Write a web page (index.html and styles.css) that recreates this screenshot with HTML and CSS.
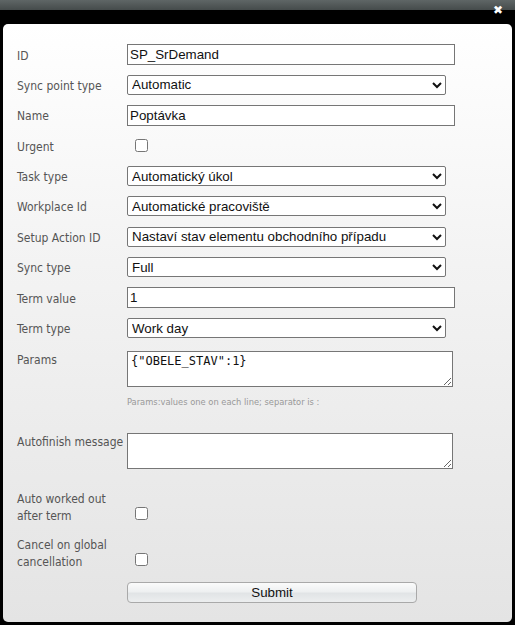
FILE: index.html
```html
<!DOCTYPE html>
<html>
<head>
<meta charset="utf-8">
<link rel="stylesheet" href="styles.css">
</head>
<body>
<div class="titlebar"></div>
<span class="close">✖</span>
<div class="dialog">
  <form class="form">
    <div class="row"><label class="lbl">ID</label><input class="txt" type="text" value="SP_SrDemand"></div>
    <div class="row"><label class="lbl">Sync point type</label><select class="sel"><option>Automatic</option></select></div>
    <div class="row"><label class="lbl">Name</label><input class="txt" type="text" value="Poptávka"></div>
    <div class="row"><label class="lbl">Urgent</label><input class="chk" type="checkbox"></div>
    <div class="row"><label class="lbl">Task type</label><select class="sel"><option>Automatický úkol</option></select></div>
    <div class="row"><label class="lbl">Workplace Id</label><select class="sel"><option>Automatické pracoviště</option></select></div>
    <div class="row"><label class="lbl">Setup Action ID</label><select class="sel"><option>Nastaví stav elementu obchodního případu</option></select></div>
    <div class="row"><label class="lbl">Sync type</label><select class="sel"><option>Full</option></select></div>
    <div class="row"><label class="lbl">Term value</label><input class="txt" type="text" value="1"></div>
    <div class="row"><label class="lbl">Term type</label><select class="sel"><option>Work day</option></select></div>
    <div class="row row-area params"><label class="lbl">Params</label><textarea class="area">{"OBELE_STAV":1}</textarea></div>
    <div class="hint">Params:values one on each line; separator is :</div>
    <div class="row row-area autofinish"><label class="lbl">Autofinish message</label><textarea class="area"></textarea></div>
    <div class="row row-multi"><label class="lbl">Auto worked out after term</label><input class="chk" type="checkbox"></div>
    <div class="row row-multi"><label class="lbl">Cancel on global cancellation</label><input class="chk" type="checkbox"></div>
    <div class="actions"><button class="submit" type="button">Submit</button></div>
  </form>
</div>
</body>
</html>
```
FILE: styles.css
```css
html, body {
  margin: 0;
  padding: 0;
  background: #000;
  height: 625px;
  overflow: hidden;
}
.titlebar {
  height: 10px;
  background: linear-gradient(#5f6666, #454b4b);
  margin-bottom: 14px;
}
.close {
  position: absolute;
  left: 493px;
  top: 3px;
  color: #fff;
  font: bold 12px "DejaVu Sans", sans-serif;
  line-height: 14px;
}
.dialog {
  margin: 0 3px;
  height: 598px;
  box-sizing: border-box;
  border-radius: 5px;
  background: linear-gradient(#ffffff 0%, #f3f3f3 40%, #e4e4e4 100%);
  padding: 20px 0 0 14px;
}
.form {
  display: flex;
  flex-direction: column;
}
.row {
  display: flex;
  align-items: center;
  height: 21px;
  margin-bottom: 9.4px;
}
.lbl {
  width: 110px;
  flex: none;
  font: 12px "DejaVu Sans Condensed", "DejaVu Sans", sans-serif;
  font-stretch: condensed;
  color: #555;
  line-height: 17px;
  padding-top: 3px;
}
.txt {
  box-sizing: border-box;
  width: 328px;
  height: 21px;
  margin: 0;
  border: 1px solid #767676;
  padding: 1px 2px;
  font: 13.33px "Liberation Sans", Arial, sans-serif;
  color: #111;
  background: #fff;
}
.sel {
  box-sizing: border-box;
  width: 319px;
  height: 20px;
  margin: 0;
  font: 13.33px "Liberation Sans", Arial, sans-serif;
  color: #111;
  background: #fff;
  border: 1px solid #767676;
  border-radius: 2px;
}
.chk {
  width: 13px;
  height: 13px;
  margin: 0 0 0 8px;
}
.row-area {
  height: auto;
  align-items: flex-start;
}
.row-area .lbl {
  padding-top: 1px;
}
.params {
  margin-top: 3px;
  margin-bottom: 0;
}
.area {
  box-sizing: border-box;
  width: 326px;
  height: 36px;
  margin: 0;
  border: 1px solid #767676;
  padding: 2px 3px;
  font: 12px "DejaVu Sans Mono", monospace;
  color: #111;
  background: #fff;
}
.hint {
  margin: 9px 0 0 110px;
  font: 9.25px "DejaVu Sans Condensed", "DejaVu Sans", sans-serif;
  font-stretch: condensed;
  color: #999;
  line-height: 11px;
  height: 11px;
}
.autofinish {
  margin-top: 26px;
  margin-bottom: 21px;
}
.row-multi {
  height: 34px;
  align-items: flex-end;
  margin-bottom: 12px;
}
.row-multi .lbl {
  padding-top: 0;
  position: relative;
  top: 1px;
}
.row-multi .chk {
  margin-bottom: 4px;
}
.actions {
  padding-left: 110px;
  display: flex;
}
.submit {
  width: 290px;
  height: 21px;
  margin: 0;
  padding: 0;
  border: 1px solid #a9a9a9;
  border-radius: 4px;
  background: linear-gradient(#fbfbfb 0%, #eef0f1 45%, #e1e4e6 55%, #eceeef 100%);
  font: 13.33px "Liberation Sans", Arial, sans-serif;
  color: #111;
}
```
